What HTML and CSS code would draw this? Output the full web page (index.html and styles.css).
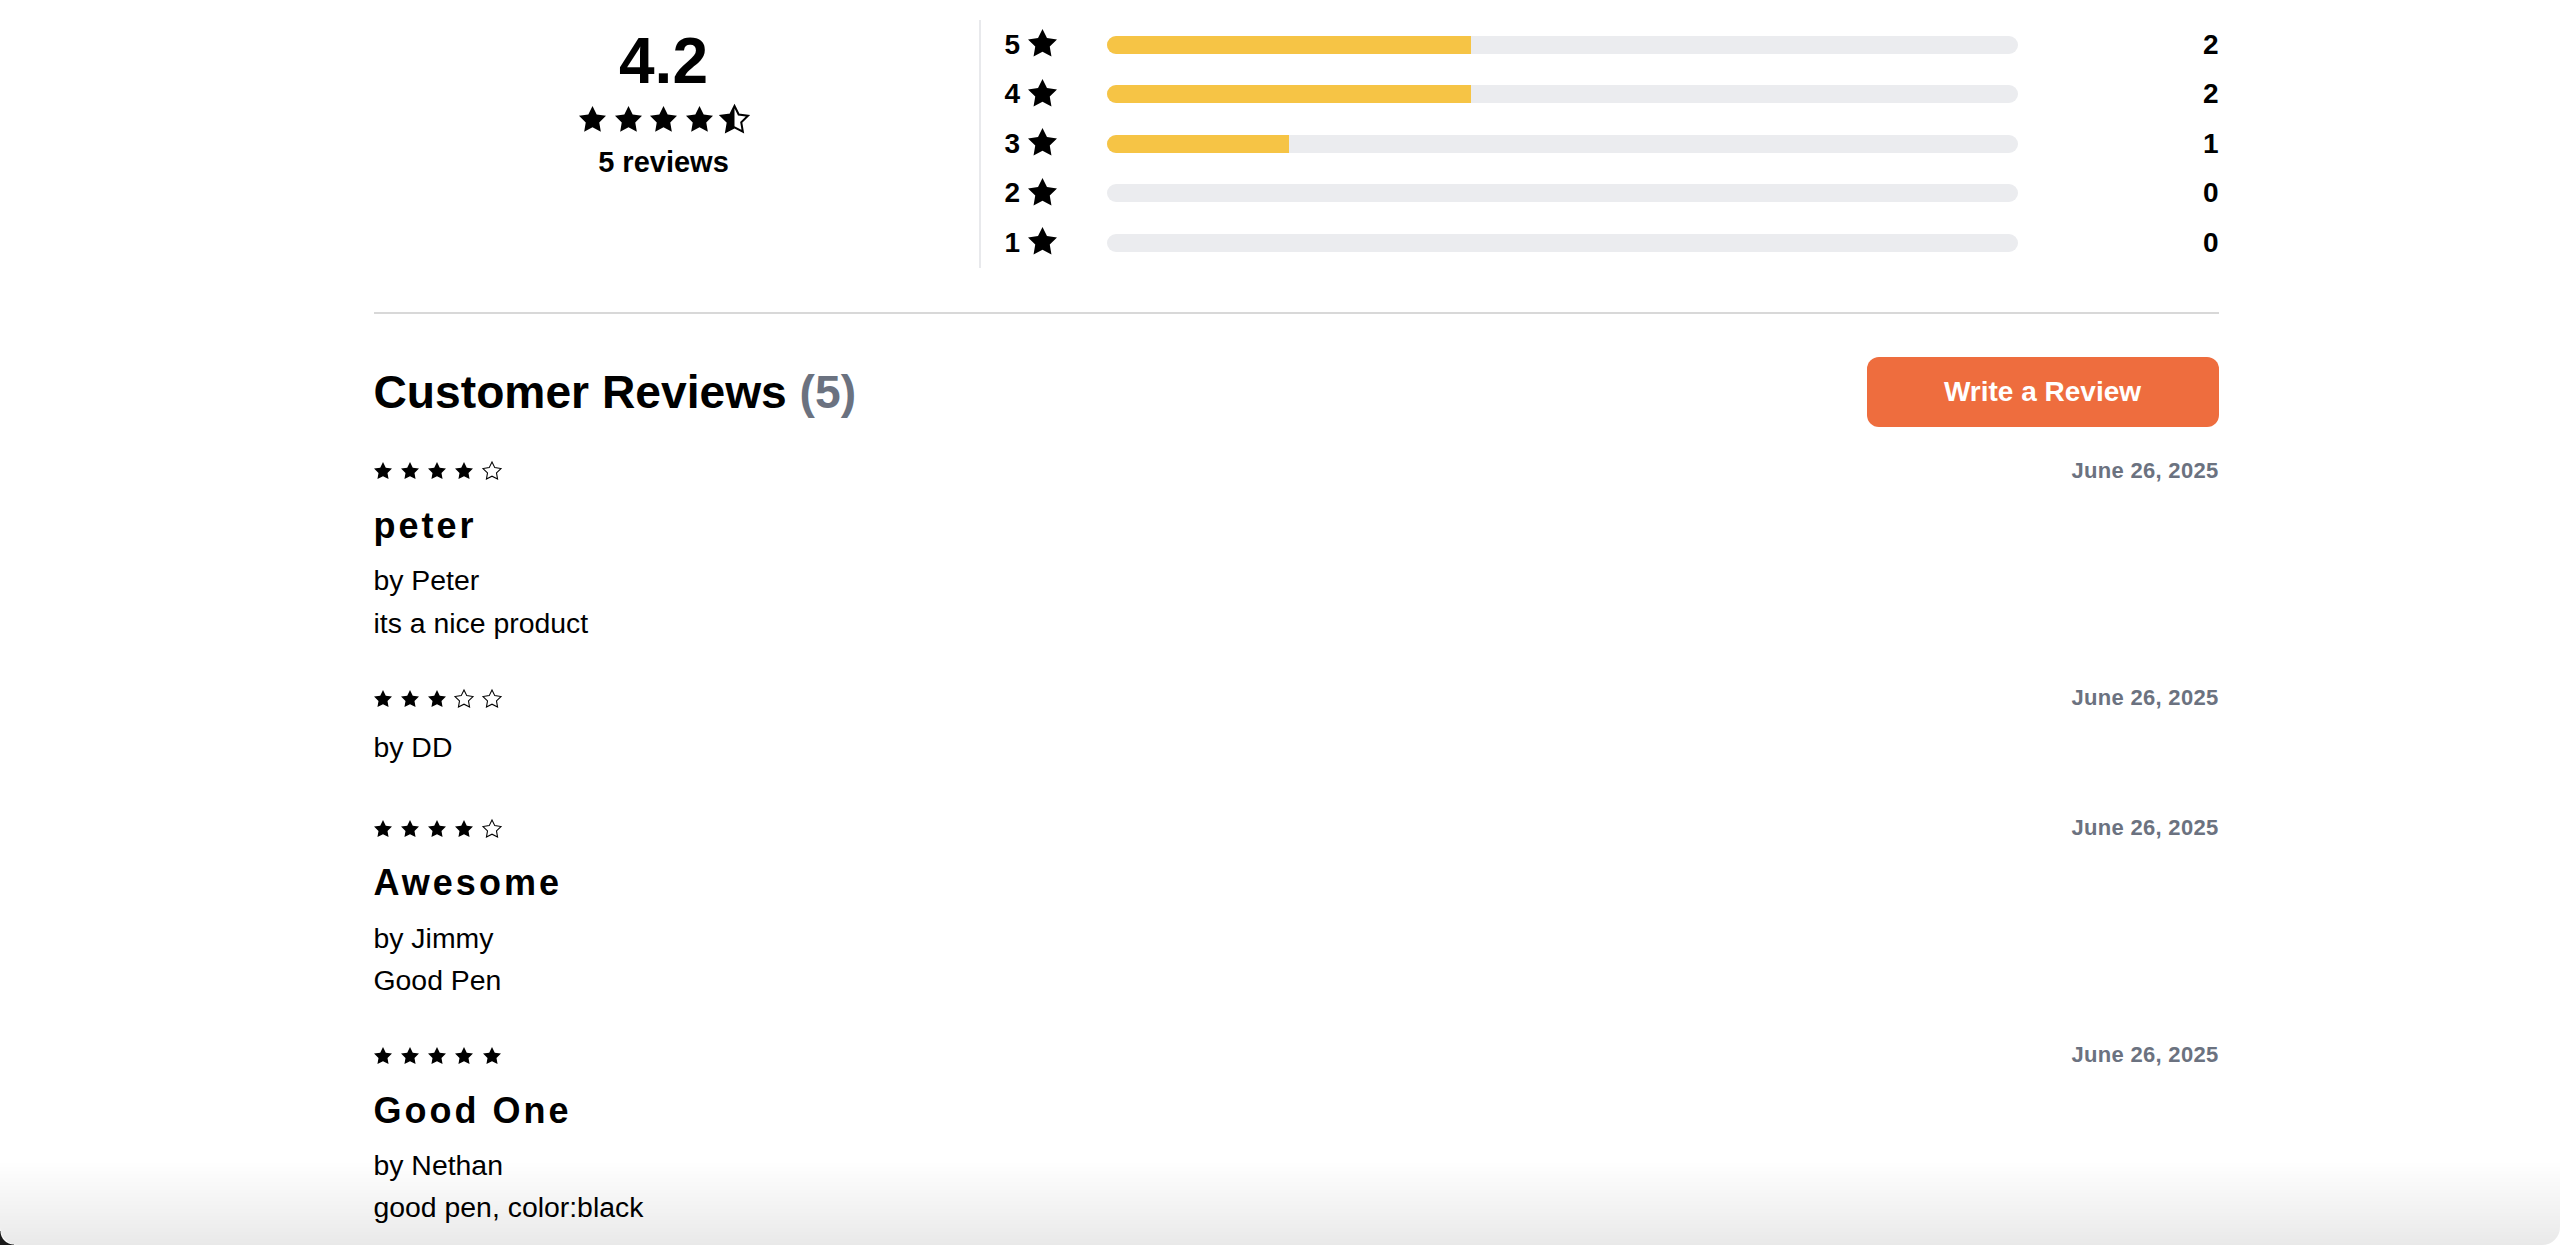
FILE: index.html
```html
<!DOCTYPE html>
<html lang="en">
<head>
<meta charset="utf-8">
<title>Customer Reviews</title>
<link rel="stylesheet" href="styles.css">
</head>
<body>
<div class="page">
  <section class="summary">
    <div class="summary-score">
      <div class="score">4.2</div>
      <div class="stars stars-lg">
        <svg viewBox="2 2 20 19.02"><path class="s-fill" d="M12 2l3.09 6.26L22 9.27l-5 4.87 1.18 6.88L12 17.77l-6.18 3.25L7 14.14 2 9.27l6.91-1.01L12 2z"/></svg>
        <svg viewBox="2 2 20 19.02"><path class="s-fill" d="M12 2l3.09 6.26L22 9.27l-5 4.87 1.18 6.88L12 17.77l-6.18 3.25L7 14.14 2 9.27l6.91-1.01L12 2z"/></svg>
        <svg viewBox="2 2 20 19.02"><path class="s-fill" d="M12 2l3.09 6.26L22 9.27l-5 4.87 1.18 6.88L12 17.77l-6.18 3.25L7 14.14 2 9.27l6.91-1.01L12 2z"/></svg>
        <svg viewBox="2 2 20 19.02"><path class="s-fill" d="M12 2l3.09 6.26L22 9.27l-5 4.87 1.18 6.88L12 17.77l-6.18 3.25L7 14.14 2 9.27l6.91-1.01L12 2z"/></svg>
        <svg viewBox="2 2 20 19.02"><path class="s-outline-thick" d="M12 2l3.09 6.26L22 9.27l-5 4.87 1.18 6.88L12 17.77l-6.18 3.25L7 14.14 2 9.27l6.91-1.01L12 2z"/><path class="s-fill" d="M12 2L12 17.77L5.82 21.02L7 14.14L2 9.27L8.91 8.26Z"/></svg>
      </div>
      <div class="count">5 reviews</div>
    </div>
    <div class="dist">
      <div class="dist-row">
        <div class="dist-label"><span>5</span><svg class="star-label" viewBox="2 2 20 19.02"><path class="s-fill" d="M12 2l3.09 6.26L22 9.27l-5 4.87 1.18 6.88L12 17.77l-6.18 3.25L7 14.14 2 9.27l6.91-1.01L12 2z"/></svg></div>
        <div class="bar"><div class="bar-fill" style="width:40%"></div></div>
        <div class="dist-count">2</div>
      </div>
      <div class="dist-row">
        <div class="dist-label"><span>4</span><svg class="star-label" viewBox="2 2 20 19.02"><path class="s-fill" d="M12 2l3.09 6.26L22 9.27l-5 4.87 1.18 6.88L12 17.77l-6.18 3.25L7 14.14 2 9.27l6.91-1.01L12 2z"/></svg></div>
        <div class="bar"><div class="bar-fill" style="width:40%"></div></div>
        <div class="dist-count">2</div>
      </div>
      <div class="dist-row">
        <div class="dist-label"><span>3</span><svg class="star-label" viewBox="2 2 20 19.02"><path class="s-fill" d="M12 2l3.09 6.26L22 9.27l-5 4.87 1.18 6.88L12 17.77l-6.18 3.25L7 14.14 2 9.27l6.91-1.01L12 2z"/></svg></div>
        <div class="bar"><div class="bar-fill" style="width:20%"></div></div>
        <div class="dist-count">1</div>
      </div>
      <div class="dist-row">
        <div class="dist-label"><span>2</span><svg class="star-label" viewBox="2 2 20 19.02"><path class="s-fill" d="M12 2l3.09 6.26L22 9.27l-5 4.87 1.18 6.88L12 17.77l-6.18 3.25L7 14.14 2 9.27l6.91-1.01L12 2z"/></svg></div>
        <div class="bar"><div class="bar-fill" style="width:0%"></div></div>
        <div class="dist-count">0</div>
      </div>
      <div class="dist-row">
        <div class="dist-label"><span>1</span><svg class="star-label" viewBox="2 2 20 19.02"><path class="s-fill" d="M12 2l3.09 6.26L22 9.27l-5 4.87 1.18 6.88L12 17.77l-6.18 3.25L7 14.14 2 9.27l6.91-1.01L12 2z"/></svg></div>
        <div class="bar"><div class="bar-fill" style="width:0%"></div></div>
        <div class="dist-count">0</div>
      </div>
    </div>
  </section>

  <div class="divider"></div>

  <div class="reviews-head">
    <h2 class="reviews-title">Customer Reviews <span class="muted">(5)</span></h2>
    <button class="write-btn" type="button">Write a Review</button>
  </div>

  <div class="review-list">
    <article class="review">
      <div class="review-head">
        <div class="stars stars-sm">
          <svg viewBox="2 2 20 19.02"><path class="s-fill" d="M12 2l3.09 6.26L22 9.27l-5 4.87 1.18 6.88L12 17.77l-6.18 3.25L7 14.14 2 9.27l6.91-1.01L12 2z"/></svg>
          <svg viewBox="2 2 20 19.02"><path class="s-fill" d="M12 2l3.09 6.26L22 9.27l-5 4.87 1.18 6.88L12 17.77l-6.18 3.25L7 14.14 2 9.27l6.91-1.01L12 2z"/></svg>
          <svg viewBox="2 2 20 19.02"><path class="s-fill" d="M12 2l3.09 6.26L22 9.27l-5 4.87 1.18 6.88L12 17.77l-6.18 3.25L7 14.14 2 9.27l6.91-1.01L12 2z"/></svg>
          <svg viewBox="2 2 20 19.02"><path class="s-fill" d="M12 2l3.09 6.26L22 9.27l-5 4.87 1.18 6.88L12 17.77l-6.18 3.25L7 14.14 2 9.27l6.91-1.01L12 2z"/></svg>
          <svg viewBox="2 2 20 19.02"><path class="s-outline" d="M12 2l3.09 6.26L22 9.27l-5 4.87 1.18 6.88L12 17.77l-6.18 3.25L7 14.14 2 9.27l6.91-1.01L12 2z"/></svg>
        </div>
        <div class="review-date">June 26, 2025</div>
      </div>
      <h3 class="review-title">peter</h3>
      <p class="review-author">by Peter</p>
      <p class="review-body">its a nice product</p>
    </article>

    <article class="review">
      <div class="review-head">
        <div class="stars stars-sm">
          <svg viewBox="2 2 20 19.02"><path class="s-fill" d="M12 2l3.09 6.26L22 9.27l-5 4.87 1.18 6.88L12 17.77l-6.18 3.25L7 14.14 2 9.27l6.91-1.01L12 2z"/></svg>
          <svg viewBox="2 2 20 19.02"><path class="s-fill" d="M12 2l3.09 6.26L22 9.27l-5 4.87 1.18 6.88L12 17.77l-6.18 3.25L7 14.14 2 9.27l6.91-1.01L12 2z"/></svg>
          <svg viewBox="2 2 20 19.02"><path class="s-fill" d="M12 2l3.09 6.26L22 9.27l-5 4.87 1.18 6.88L12 17.77l-6.18 3.25L7 14.14 2 9.27l6.91-1.01L12 2z"/></svg>
          <svg viewBox="2 2 20 19.02"><path class="s-outline" d="M12 2l3.09 6.26L22 9.27l-5 4.87 1.18 6.88L12 17.77l-6.18 3.25L7 14.14 2 9.27l6.91-1.01L12 2z"/></svg>
          <svg viewBox="2 2 20 19.02"><path class="s-outline" d="M12 2l3.09 6.26L22 9.27l-5 4.87 1.18 6.88L12 17.77l-6.18 3.25L7 14.14 2 9.27l6.91-1.01L12 2z"/></svg>
        </div>
        <div class="review-date">June 26, 2025</div>
      </div>
      <p class="review-author">by DD</p>
      <p class="review-body review-body-empty"></p>
    </article>

    <article class="review">
      <div class="review-head">
        <div class="stars stars-sm">
          <svg viewBox="2 2 20 19.02"><path class="s-fill" d="M12 2l3.09 6.26L22 9.27l-5 4.87 1.18 6.88L12 17.77l-6.18 3.25L7 14.14 2 9.27l6.91-1.01L12 2z"/></svg>
          <svg viewBox="2 2 20 19.02"><path class="s-fill" d="M12 2l3.09 6.26L22 9.27l-5 4.87 1.18 6.88L12 17.77l-6.18 3.25L7 14.14 2 9.27l6.91-1.01L12 2z"/></svg>
          <svg viewBox="2 2 20 19.02"><path class="s-fill" d="M12 2l3.09 6.26L22 9.27l-5 4.87 1.18 6.88L12 17.77l-6.18 3.25L7 14.14 2 9.27l6.91-1.01L12 2z"/></svg>
          <svg viewBox="2 2 20 19.02"><path class="s-fill" d="M12 2l3.09 6.26L22 9.27l-5 4.87 1.18 6.88L12 17.77l-6.18 3.25L7 14.14 2 9.27l6.91-1.01L12 2z"/></svg>
          <svg viewBox="2 2 20 19.02"><path class="s-outline" d="M12 2l3.09 6.26L22 9.27l-5 4.87 1.18 6.88L12 17.77l-6.18 3.25L7 14.14 2 9.27l6.91-1.01L12 2z"/></svg>
        </div>
        <div class="review-date">June 26, 2025</div>
      </div>
      <h3 class="review-title">Awesome</h3>
      <p class="review-author">by Jimmy</p>
      <p class="review-body">Good Pen</p>
    </article>

    <article class="review">
      <div class="review-head">
        <div class="stars stars-sm">
          <svg viewBox="2 2 20 19.02"><path class="s-fill" d="M12 2l3.09 6.26L22 9.27l-5 4.87 1.18 6.88L12 17.77l-6.18 3.25L7 14.14 2 9.27l6.91-1.01L12 2z"/></svg>
          <svg viewBox="2 2 20 19.02"><path class="s-fill" d="M12 2l3.09 6.26L22 9.27l-5 4.87 1.18 6.88L12 17.77l-6.18 3.25L7 14.14 2 9.27l6.91-1.01L12 2z"/></svg>
          <svg viewBox="2 2 20 19.02"><path class="s-fill" d="M12 2l3.09 6.26L22 9.27l-5 4.87 1.18 6.88L12 17.77l-6.18 3.25L7 14.14 2 9.27l6.91-1.01L12 2z"/></svg>
          <svg viewBox="2 2 20 19.02"><path class="s-fill" d="M12 2l3.09 6.26L22 9.27l-5 4.87 1.18 6.88L12 17.77l-6.18 3.25L7 14.14 2 9.27l6.91-1.01L12 2z"/></svg>
          <svg viewBox="2 2 20 19.02"><path class="s-fill" d="M12 2l3.09 6.26L22 9.27l-5 4.87 1.18 6.88L12 17.77l-6.18 3.25L7 14.14 2 9.27l6.91-1.01L12 2z"/></svg>
        </div>
        <div class="review-date">June 26, 2025</div>
      </div>
      <h3 class="review-title">Good One</h3>
      <p class="review-author">by Nethan</p>
      <p class="review-body">good pen, color:black</p>
    </article>
  </div>
</div>
<div class="bottom-fade"></div>
<div class="corner"></div>
</body>
</html>
```

FILE: styles.css
```css
html, body {
  margin: 0;
  padding: 0;
  background: #ffffff;
  overflow: hidden;
}

body {
  font-family: "Liberation Sans", Arial, Helvetica, sans-serif;
  color: #000000;
}

.page {
  margin-left: 373.5px;
  width: 1845px;
  padding-top: 20px;
}

/* ---------- summary ---------- */
.summary {
  display: flex;
  align-items: flex-start;
}

.summary-score {
  width: 580px;
  display: flex;
  flex-direction: column;
  align-items: center;
}

.score {
  margin-top: 8.6px;
  font-size: 64px;
  line-height: 64px;
  font-weight: 700;
}

.stars {
  display: flex;
  align-items: center;
}

.stars svg {
  display: block;
  overflow: visible;
}

.stars-lg {
  margin-top: 13.4px;
  gap: 8.5px;
}

.stars-lg svg {
  width: 27px;
  height: 25.7px;
}

.count {
  margin-top: 12.3px;
  font-size: 29px;
  line-height: 36px;
  font-weight: 700;
}

.s-fill {
  fill: #000000;
}

.s-outline {
  fill: none;
  stroke: #000000;
  stroke-width: 1.2;
  stroke-linejoin: miter;
}

.s-outline-thick {
  fill: #ffffff;
  stroke: #000000;
  stroke-width: 1.5;
  stroke-linejoin: miter;
}

.dist {
  margin-left: 25px;
  border-left: 2px solid #e8e9ec;
  padding-left: 24px;
  flex: 1;
  display: flex;
  flex-direction: column;
}

.dist-row {
  height: 49.5px;
  display: flex;
  align-items: center;
}

.dist-label {
  width: 102px;
  display: flex;
  align-items: center;
  gap: 8px;
  font-size: 28px;
  line-height: 28px;
  font-weight: 700;
}

.star-label {
  display: block;
  width: 29px;
  height: 27.6px;
  margin-top: -3px;
}

.bar {
  flex: 1;
  height: 18px;
  border-radius: 9px;
  background: #ebecef;
  overflow: hidden;
}

.bar-fill {
  height: 100%;
  background: #f6c445;
}

.dist-count {
  width: 201px;
  text-align: right;
  font-size: 28px;
  line-height: 28px;
  font-weight: 700;
}

/* ---------- divider ---------- */
.divider {
  margin-top: 44.5px;
  height: 2px;
  background: #d8d8d8;
}

/* ---------- reviews header ---------- */
.reviews-head {
  margin-top: 43px;
  height: 70px;
  display: flex;
  align-items: center;
  justify-content: space-between;
}

.reviews-title {
  margin: 0;
  font-size: 46.2px;
  line-height: 70px;
  font-weight: 700;
}

.muted {
  color: #6b7280;
}

.write-btn {
  width: 352px;
  height: 70px;
  border: none;
  border-radius: 12px;
  background: #ee6d3e;
  color: #ffffff;
  font-family: "Liberation Sans", Arial, Helvetica, sans-serif;
  font-size: 28px;
  font-weight: 700;
  padding: 0;
}

/* ---------- reviews ---------- */
.review-list {
  margin-top: 29px;
  display: flex;
  flex-direction: column;
}

.review {
  display: flex;
  flex-direction: column;
  margin-bottom: 38.7px;
}

.review:last-child {
  margin-bottom: 0;
}

.review-head {
  height: 30px;
  display: flex;
  align-items: center;
  justify-content: space-between;
  margin-bottom: 12.6px;
}

.stars-sm {
  gap: 9.3px;
}

.stars-sm svg {
  width: 18px;
  height: 17.1px;
}

.review-date {
  font-size: 22px;
  line-height: 30px;
  font-weight: 700;
  color: #6b7280;
  letter-spacing: 0.3px;
}

.review-title {
  margin: 5.5px 0 11.3px;
  font-size: 36px;
  line-height: 44px;
  font-weight: 700;
  letter-spacing: 3px;
}

.review-author,
.review-body {
  margin: 0;
  font-size: 28.4px;
  line-height: 42.5px;
}

.review-body-empty {
  height: 6.5px;
}

/* ---------- window bottom shading ---------- */
.bottom-fade {
  position: fixed;
  left: 0;
  right: 0;
  bottom: 0;
  height: 84px;
  background: linear-gradient(to bottom, rgba(0, 0, 0, 0), rgba(0, 0, 0, 0.085));
  border-radius: 0 0 18px 18px;
  pointer-events: none;
}

.corner {
  position: fixed;
  left: 0;
  bottom: 0;
  width: 14px;
  height: 14px;
  background: radial-gradient(circle at 100% 0, rgba(0, 0, 0, 0) 13px, #1a1a1a 14px);
  pointer-events: none;
}
```
